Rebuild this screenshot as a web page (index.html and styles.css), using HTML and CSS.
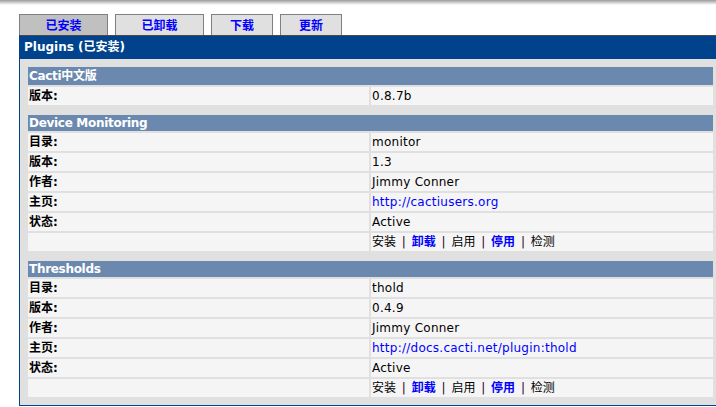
FILE: index.html
```html
<!DOCTYPE html>
<html>
<head>
<meta charset="utf-8">
<title>Plugins</title>
<link rel="stylesheet" href="styles.css">
</head>
<body>
<div class="topline"></div>
<div class="tabs">
  <div class="tab tab-wide tab-active">已安装</div>
  <div class="tab tab-wide">已卸载</div>
  <div class="tab tab-narrow">下载</div>
  <div class="tab tab-narrow">更新</div>
</div>
<div class="panel">
  <div class="panel-head">Plugins (已安装)</div>
  <div class="panel-body">
    <div class="section">
      <div class="band band-cjk">Cacti中文版</div>
      <div class="row"><div class="cell label">版本:</div><div class="cell value">0.8.7b</div></div>
    </div>
    <div class="section">
      <div class="band">Device Monitoring</div>
      <div class="row"><div class="cell label">目录:</div><div class="cell value">monitor</div></div>
      <div class="row"><div class="cell label">版本:</div><div class="cell value">1.3</div></div>
      <div class="row"><div class="cell label">作者:</div><div class="cell value">Jimmy Conner</div></div>
      <div class="row"><div class="cell label">主页:</div><div class="cell value"><a class="link" href="#">http://cactiusers.org</a></div></div>
      <div class="row"><div class="cell label">状态:</div><div class="cell value">Active</div></div>
      <div class="row"><div class="cell label"></div><div class="cell value actions">安装 <span class="sep">|</span> <a class="act" href="#">卸载</a> <span class="sep">|</span> 启用 <span class="sep">|</span> <a class="act" href="#">停用</a> <span class="sep">|</span> 检测</div></div>
    </div>
    <div class="section">
      <div class="band">Thresholds</div>
      <div class="row"><div class="cell label">目录:</div><div class="cell value">thold</div></div>
      <div class="row"><div class="cell label">版本:</div><div class="cell value">0.4.9</div></div>
      <div class="row"><div class="cell label">作者:</div><div class="cell value">Jimmy Conner</div></div>
      <div class="row"><div class="cell label">主页:</div><div class="cell value"><a class="link" href="#">http://docs.cacti.net/plugin:thold</a></div></div>
      <div class="row"><div class="cell label">状态:</div><div class="cell value">Active</div></div>
      <div class="row"><div class="cell label"></div><div class="cell value actions">安装 <span class="sep">|</span> <a class="act" href="#">卸载</a> <span class="sep">|</span> 启用 <span class="sep">|</span> <a class="act" href="#">停用</a> <span class="sep">|</span> 检测</div></div>
    </div>
  </div>
</div>
</body>
</html>
```

FILE: styles.css
```css
html, body {
  margin: 0;
  padding: 0;
  overflow: hidden;
  background: #ffffff;
}
body {
  font-family: "DejaVu Sans", "Noto Sans CJK SC", sans-serif;
  font-size: 12px;
  color: #000000;
  width: 716px;
  height: 407px;
}
.topline {
  height: 5px;
  background: linear-gradient(to bottom, #9a9a9a, #d8d8d8 60%, #ffffff);
}
.tabs {
  display: flex;
  gap: 7px;
  margin-top: 9px;
  padding-left: 19px;
}
.tab {
  box-sizing: border-box;
  height: 21px;
  border: 1px solid #808080;
  border-bottom: none;
  background: #e0e0e0;
  color: #0000ff;
  font-weight: bold;
  font-family: "Noto Sans CJK SC", sans-serif;
  font-size: 12px;
  line-height: 19px;
  text-align: center;
}
.tab-wide { width: 89px; }
.tab-narrow { width: 62px; }
.tab-active { background: #c0c0c0; }
.panel {
  box-sizing: border-box;
  margin-left: 19px;
  width: 703px;
  border-left: 1px solid #00438c;
  border-right: 1px solid #00438c;
  border-bottom: 1px solid #00438c;
}
.panel-head {
  height: 23px;
  border-top: 1px solid #4a4a4a;
  background: #00438c;
  color: #ffffff;
  font-weight: bold;
  line-height: 23px;
  padding-left: 4px;
}
.panel-body {
  background: #e0e0e0;
  padding: 8px;
  display: flex;
  flex-direction: column;
  gap: 10px;
}
.section {
  display: flex;
  flex-direction: column;
  gap: 2px;
}
.band {
  height: 16px;
  line-height: 16px;
  background: #6b89ae;
  color: #ffffff;
  font-weight: bold;
  padding-left: 1px;
  letter-spacing: -0.3px;
}
.band-cjk {
  height: 18px;
  line-height: 18px;
}
.row {
  display: grid;
  grid-template-columns: 341px 1fr;
  gap: 2px;
}
.cell {
  height: 18px;
  line-height: 18px;
  background: #f5f5f5;
  padding-left: 1px;
  white-space: nowrap;
}
.label {
  font-weight: bold;
}
.value {
  letter-spacing: 0.25px;
}
.link {
  color: #0000ff;
  text-decoration: none;
}
.actions {
  letter-spacing: 0;
}
.act {
  color: #0000ff;
  font-weight: bold;
  text-decoration: none;
}
.sep {
  color: #2a0020;
  margin: 0 2px;
}
```
